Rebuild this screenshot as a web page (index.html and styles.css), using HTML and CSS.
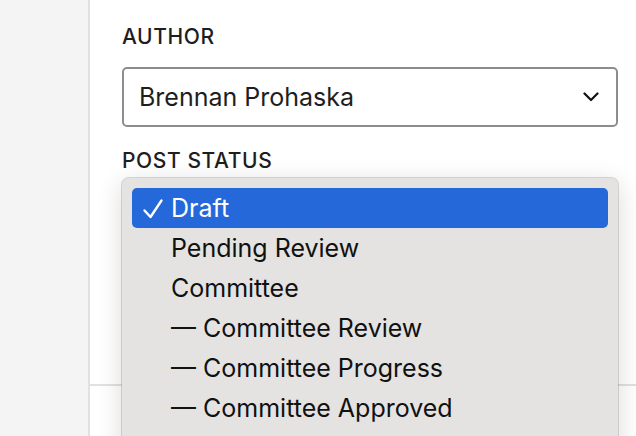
FILE: index.html
```html
<!DOCTYPE html>
<html lang="en">
<head>
<meta charset="utf-8">
<title>Post settings</title>
<link rel="stylesheet" href="styles.css">
</head>
<body>
<div class="layout">
  <aside class="sidebar"></aside>
  <main class="panel">
    <section class="field">
      <label class="field-label">AUTHOR</label>
      <div class="select">
        <span class="select-value">Brennan Prohaska</span>
        <svg class="chevron" width="16" height="10" viewBox="0 0 16 10"><path d="M1.5 1.5 L8 8 L14.5 1.5" fill="none" stroke="#111" stroke-width="2.2" stroke-linecap="round" stroke-linejoin="round"/></svg>
      </div>
    </section>
    <section class="field field-status">
      <label class="field-label">POST STATUS</label>
      <div class="select select-focus">
        <span class="select-value">Draft</span>
      </div>
    </section>
    <div class="divider"></div>
  </main>
</div>
<ul class="menu">
  <li class="menu-item is-selected"><svg class="check" width="22" height="22" viewBox="0 0 22 22"><path d="M2.5 12.5 L8.5 19 L19.5 2.5" fill="none" stroke="#fff" stroke-width="2.4" stroke-linecap="round" stroke-linejoin="round"/></svg>Draft</li>
  <li class="menu-item">Pending Review</li>
  <li class="menu-item">Committee</li>
  <li class="menu-item">— Committee Review</li>
  <li class="menu-item">— Committee Progress</li>
  <li class="menu-item">— Committee Approved</li>
</ul>
</body>
</html>
```
FILE: styles.css
```css
html, body {
  margin: 0;
  padding: 0;
  height: 100%;
  overflow: hidden;
  background: #ffffff;
  font-family: "Inter", "Noto Sans", "Liberation Sans", sans-serif;
  color: #1e1e1e;
}

.layout {
  display: flex;
  height: 436px;
}

.sidebar {
  width: 88px;
  flex: none;
  background: #f4f4f4;
  border-right: 2px solid #e1e1e1;
}

.panel {
  flex: 1;
  display: flex;
  flex-direction: column;
  padding: 24px 18px 0 32px;
}

.field {
  display: flex;
  flex-direction: column;
}

.field-label {
  font-size: 21px;
  letter-spacing: 0.6px;
  line-height: 26px;
  font-weight: 500;
  color: #1e1e1e;
}

.select {
  margin-top: 17px;
  height: 56px;
  border: 2px solid #8d8d8d;
  border-radius: 5px;
  display: flex;
  align-items: center;
  justify-content: space-between;
  padding: 0 17px 0 15px;
}

.select-value {
  font-size: 25px;
  color: #1e1e1e;
}

.chevron {
  display: block;
}

.field-status {
  margin-top: 21px;
}

.field-status .select {
  margin-top: 11px;
}

.select-focus {
  border-color: #1f5aa8;
}

.divider {
  margin: 139px -18px 0 -32px;
  height: 2px;
  background: #e1e1e1;
}

.menu {
  position: absolute;
  left: 121px;
  top: 177px;
  width: 476px;
  margin: 0;
  padding: 10px 10px 0 10px;
  list-style: none;
  background: #e4e3e1;
  background-clip: padding-box;
  border: 1px solid rgba(0, 0, 0, 0.14);
  border-bottom: none;
  border-radius: 8px 8px 0 0;
  box-shadow: 0 6px 26px rgba(0, 0, 0, 0.14);
  height: 300px;
}

.menu-item {
  height: 40px;
  line-height: 40px;
  padding-left: 39px;
  font-size: 25px;
  color: #111;
  position: relative;
  border-radius: 5px;
  white-space: nowrap;
}

.menu-item.is-selected {
  background: #2468d9;
  color: #fff;
}

.check {
  position: absolute;
  left: 10px;
  top: 10px;
}
```
